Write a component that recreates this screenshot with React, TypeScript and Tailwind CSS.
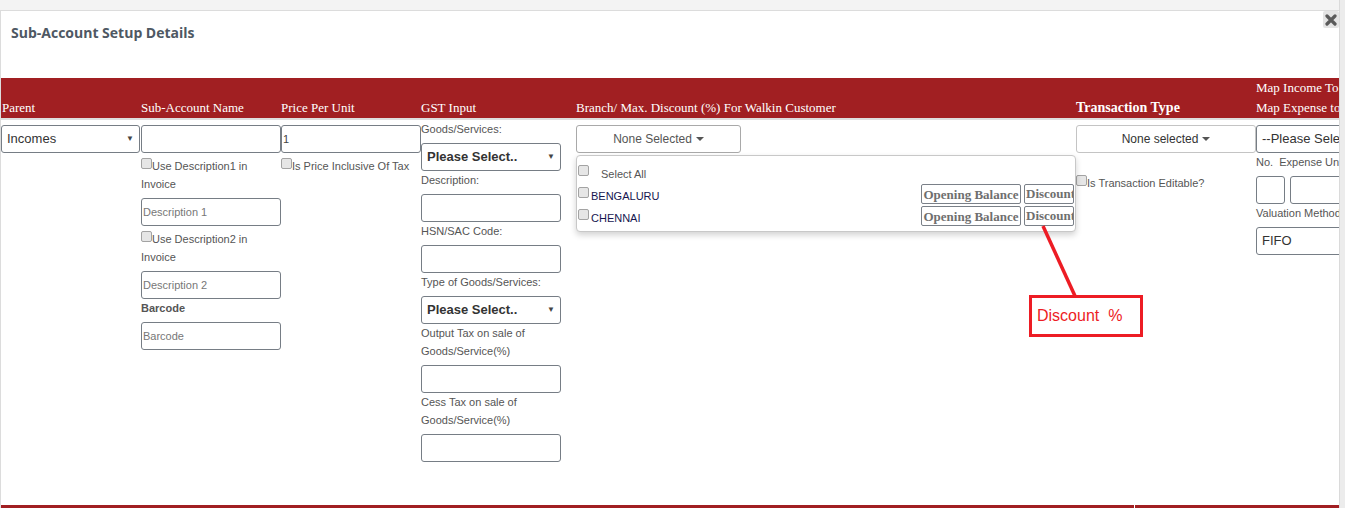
const inputCls = "block h-[28px] border border-[#767d85] rounded-[3px] bg-white";
const labelCls = "text-[11px] leading-[18px] text-[#555]";

const Check = () => (
  <span className="inline-block w-[11px] h-[11px] rounded-[2px] border border-[#a3a3a3] bg-[#e6e6e6] align-top mt-[1px]" />
);

const Caret = () => (
  <span className="inline-block w-0 h-0 ml-[4px] align-middle border-x-[4px] border-x-transparent border-t-[4px] border-t-[#555]" />
);

const Select = ({ text, bold, w }: { text: string; bold?: boolean; w: string }) => (
  <div className={`${inputCls} ${w} flex items-center justify-between pl-[5px] pr-[5px] text-[13px] text-[#333] ${bold ? "font-bold" : ""}`}>
    <span>{text}</span>
    <span className="text-[8px] text-[#444]">▼</span>
  </div>
);

const Header = () => (
  <div className="flex items-end h-[40px] bg-[#a11f22] text-white font-['Liberation_Serif',serif] text-[13px] leading-[20px] border-b-2 border-[#dedede] box-content whitespace-nowrap">
    <div className="w-[140px] shrink-0 pl-[1px]">Parent</div>
    <div className="w-[140px] shrink-0">Sub-Account Name</div>
    <div className="w-[140px] shrink-0">Price Per Unit</div>
    <div className="w-[155px] shrink-0">GST Input</div>
    <div className="w-[500px] shrink-0">Branch/ Max. Discount (%) For Walkin Customer</div>
    <div className="w-[180px] shrink-0 text-[14px] font-bold">Transaction Type</div>
    <div className="w-[200px] shrink-0">
      <div>Map Income To Account</div>
      <div>Map Expense to Account</div>
    </div>
  </div>
);

const BranchDropdown = () => (
  <div className="absolute left-0 top-[35px] w-[500px] h-[77px] bg-white border border-[#c8c8c8] rounded-[4px] shadow-[0_3px_6px_rgba(0,0,0,0.18)] pt-[8px] pl-[1px] pr-[1px]">
    <div className="flex items-start h-[19px] text-[11px] text-[#555]">
      <span className="inline-block w-[11px] h-[11px] rounded-[2px] border border-[#a3a3a3] bg-[#e6e6e6] mt-[1px]" />
      <span className="ml-[12px] leading-[18px] mt-[1px]">Select All</span>
    </div>
    {["BENGALURU", "CHENNAI"].map((b, i) => (
      <div key={b} className={`flex items-start h-[20px] ${i === 0 ? "mt-[1px]" : "mt-[2px]"}`}>
        <span className="inline-block w-[11px] h-[11px] rounded-[2px] border border-[#a3a3a3] bg-[#e6e6e6] mt-[3px]" />
        <span className="ml-[2px] leading-[18px] mt-[3px] text-[11px] text-[#16164f]">{b}</span>
        <div className="ml-auto flex gap-[3px] font-['Liberation_Serif',serif] font-bold text-[13px] text-[#6f6f6f]">
          <div className="w-[100px] h-[20px] border border-[#7a8088] rounded-[2px] flex items-center justify-center leading-none">
            Opening Balance
          </div>
          <div className="w-[50px] h-[20px] border border-[#7a8088] rounded-[2px] overflow-hidden whitespace-nowrap pl-[1px] leading-[18px]">
            Discount
          </div>
        </div>
      </div>
    ))}
  </div>
);

const App = () => {
  return (
    <div className="relative w-[1345px] h-[508px] overflow-hidden bg-[#f3f3f3] font-['Liberation_Sans',Arial,sans-serif]">
      <div className="absolute right-0 top-0 w-[6px] h-[508px] bg-[#ececec] border-l border-[#dadada]" />
      <div className="relative mt-[10px] w-[1339px] h-[498px] bg-white border-l border-t border-[#dcdcdc] overflow-hidden">
        <div className="absolute top-0 right-0 w-[16px] h-[17px] bg-[#e4e4e4] rounded-[2px] flex items-center justify-center">
          <svg width="12" height="12" viewBox="0 0 12 12">
            <path d="M2 2 L10 10 M10 2 L2 10" stroke="#5a5a5a" strokeWidth="3.2" strokeLinecap="round" />
          </svg>
        </div>
        <div className="h-[67px] pl-[10px] pt-[11px]">
          <h1 className="font-['Open_Sans',sans-serif] font-bold text-[14px] text-[#4e5863]">
            Sub-Account Setup Details
          </h1>
        </div>
        <Header />
        <div className="flex items-start h-[385px] whitespace-nowrap">
          <div className="w-[140px] shrink-0 pt-[5px]">
            <Select text="Incomes" w="w-[139px]" />
          </div>
          <div className="w-[140px] shrink-0 pt-[5px]">
            <input className={`${inputCls} w-[140px]`} />
            <div className={`${labelCls} mt-[4px]`}>
              <Check />Use Description1 in<br />Invoice
            </div>
            <input placeholder="Description 1" className={`${inputCls} w-[140px] mt-[5px] text-[11px] placeholder:text-[#777] pl-[1px]`} />
            <div className={`${labelCls} mt-[4px]`}>
              <Check />Use Description2 in<br />Invoice
            </div>
            <input placeholder="Description 2" className={`${inputCls} w-[140px] mt-[5px] text-[11px] placeholder:text-[#777] pl-[1px]`} />
            <div className={`${labelCls} font-bold`}>Barcode</div>
            <input placeholder="Barcode" className={`${inputCls} w-[140px] mt-[5px] text-[11px] placeholder:text-[#777] pl-[1px]`} />
          </div>
          <div className="w-[140px] shrink-0 pt-[5px]">
            <input defaultValue="1" className={`${inputCls} w-[140px] text-[11px] text-[#444] pl-[1px]`} />
            <div className={`${labelCls} mt-[4px]`}>
              <Check />Is Price Inclusive Of Tax
            </div>
          </div>
          <div className="w-[155px] shrink-0">
            <div className={labelCls}>Goods/Services:</div>
            <div className="mt-[5px]"><Select text="Please Select.." bold w="w-[140px]" /></div>
            <div className={labelCls}>Description:</div>
            <input className={`${inputCls} w-[140px] mt-[5px]`} />
            <div className={labelCls}>HSN/SAC Code:</div>
            <input className={`${inputCls} w-[140px] mt-[5px]`} />
            <div className={labelCls}>Type of Goods/Services:</div>
            <div className="mt-[5px]"><Select text="Please Select.." bold w="w-[140px]" /></div>
            <div className={labelCls}>Output Tax on sale of<br />Goods/Service(%)</div>
            <input className={`${inputCls} w-[140px] mt-[5px]`} />
            <div className={labelCls}>Cess Tax on sale of<br />Goods/Service(%)</div>
            <input className={`${inputCls} w-[140px] mt-[5px]`} />
          </div>
          <div className="relative w-[500px] shrink-0 pt-[5px]">
            <div className={`${inputCls} w-[165px] border-[#a9a9a9] flex items-center justify-center text-[12px] text-[#555]`}>
              None Selected<Caret />
            </div>
            <BranchDropdown />
          </div>
          <div className="w-[180px] shrink-0 pt-[5px]">
            <div className={`${inputCls} w-[180px] border-[#c4c4c4] flex items-center justify-center text-[12px] text-[#333]`}>
              None selected<Caret />
            </div>
            <div className={`${labelCls} mt-[21px]`}>
              <Check />Is Transaction Editable?
            </div>
          </div>
          <div className="w-[200px] shrink-0 pt-[5px]">
            <div className={`${inputCls} w-[200px] flex items-center pl-[5px] text-[13px] text-[#333]`}>
              --Please Select--
            </div>
            <div className={labelCls}>No.&nbsp;&nbsp;Expense Unit</div>
            <div className="flex gap-[5px] mt-[5px]">
              <input className={`${inputCls} w-[29px]`} />
              <input className={`${inputCls} w-[120px]`} />
            </div>
            <div className={labelCls}>Valuation Method</div>
            <div className={`${inputCls} w-[200px] mt-[5px] flex items-center pl-[5px] text-[13px] text-[#333]`}>
              FIFO
            </div>
          </div>
        </div>
        <div className="flex gap-[1px] h-[10px]">
          <div className="w-[1133px] bg-[#a11f22]" />
          <div className="flex-1 bg-[#a11f22]" />
        </div>
      </div>

      <svg className="absolute left-0 top-0 pointer-events-none" width="1345" height="508">
        <line x1="1043" y1="226" x2="1075" y2="296" stroke="#ed1c24" strokeWidth="3.5" />
      </svg>
      <div className="absolute left-[1029px] top-[295px] w-[114px] h-[42px] border-[3px] border-[#ed1c24] bg-white flex items-center pl-[5px] text-[16px] text-[#ed1c24] whitespace-pre font-['Liberation_Sans',sans-serif]">
        Discount  %
      </div>
    </div>
  );
};

export default App;
